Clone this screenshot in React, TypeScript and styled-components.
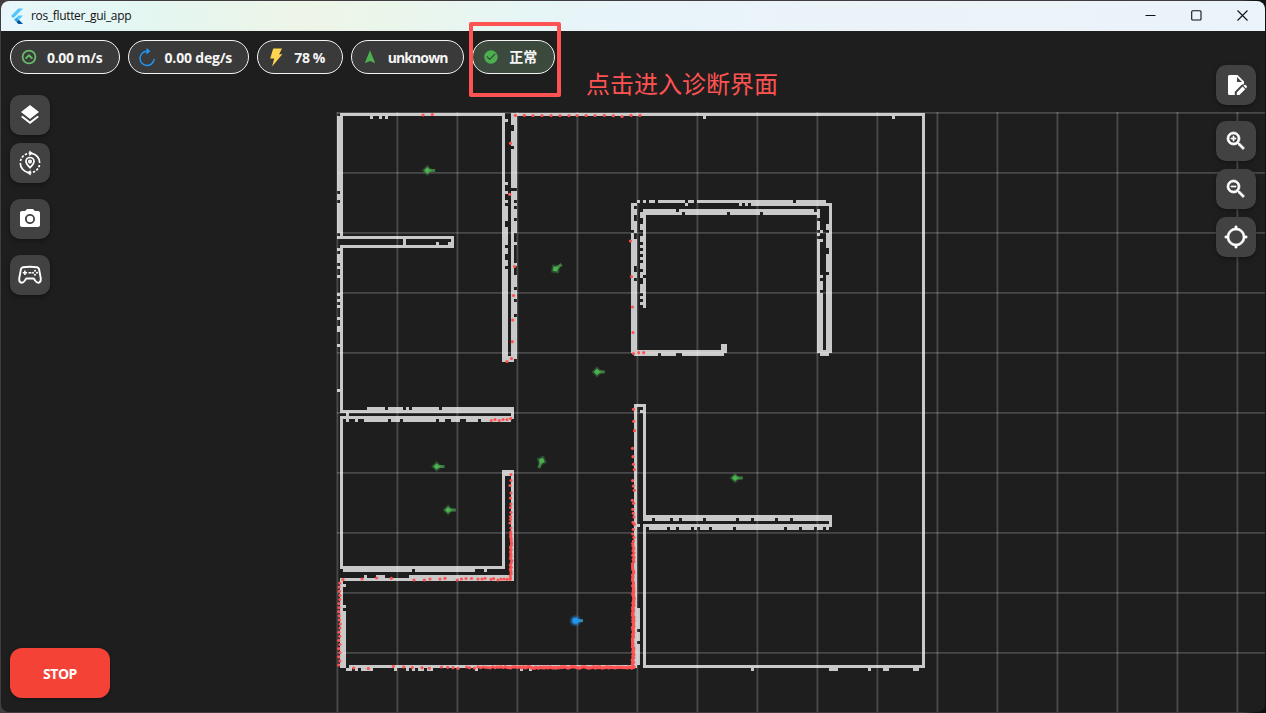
import React from "react";
import styled, { createGlobalStyle } from "styled-components";
import { MdLayers, MdPhotoCamera, MdZoomIn, MdZoomOut, MdLocationSearching, MdCheckCircle, MdNavigation } from "react-icons/md";

const GlobalStyle = createGlobalStyle`
  * { box-sizing: border-box; }
  body { margin: 0; background: #303030; font-family: "Open Sans", "Noto Sans CJK SC", sans-serif; overflow: hidden; }
`;

const Desktop = styled.div`
  width: 1266px;
  height: 713px;
  padding: 1px;
  background: linear-gradient(90deg, #403c40 0, #403c40 1240px, #111 1256px);
`;

const Window = styled.div`
  display: flex;
  flex-direction: column;
  width: 1264px;
  height: 711px;
  border-radius: 8px;
  overflow: hidden;
  background: #1e1e1e;
`;

const TitleBar = styled.header`
  display: flex;
  align-items: center;
  flex: 0 0 30px;
  padding-left: 9px;
  background: linear-gradient(97deg, #e8f6fb 0, #e3f7f4 110px, #e6f6ee 190px, #eef5e8 300px, #ebf6ea 380px, #e6f5f6 530px, #e8f4fa 640px, #ecf3f8 900px, #ebf3fb 1264px);
`;

const Title = styled.span`
  flex: 1;
  margin-left: 7px;
  font-size: 12px;
  line-height: 16px;
  letter-spacing: -0.33px;
  color: #111;
`;

const WindowControls = styled.div`
  display: flex;
  align-items: center;
`;

const ControlSlot = styled.span`
  display: flex;
  justify-content: center;
  width: 46px;
  padding-bottom: 1px;
`;

const Stage = styled.main`
  position: relative;
  display: grid;
  flex: 1;
  grid-template: minmax(0, 1fr) / minmax(0, 1fr);
`;

const MapView = styled.svg`
  grid-area: 1 / 1;
  width: 1264px;
  height: 681px;
`;

const Overlay = styled.div`
  grid-area: 1 / 1;
  z-index: 1;
  display: flex;
  justify-content: space-between;
  padding: 9px 9px 14px;
`;

const LeftPane = styled.div`
  display: flex;
  flex-direction: column;
`;

const StatusRow = styled.div`
  display: flex;
  gap: 8px;
`;

const Chip = styled.div<{ $w: number; $ok?: boolean }>`
  display: flex;
  align-items: center;
  width: ${(p) => p.$w}px;
  height: 34px;
  padding-left: 10px;
  border: 1.2px solid #f4f4f4;
  border-radius: 17px;
  background: ${(p) => (p.$ok ? "#3c4a3d" : "#3a3a3a")};
`;

const ChipIcon = styled.span<{ $c: string }>`
  display: flex;
  justify-content: center;
  width: 16px;
  margin-right: 10px;
  color: ${(p) => p.$c};
`;

const ChipText = styled.span<{ $track?: number; $lift?: boolean }>`
  padding-top: ${(p) => (p.$lift ? 0 : 2)}px;
  font-size: 14px;
  font-weight: 700;
  line-height: 20px;
  letter-spacing: ${(p) => p.$track ?? 0}px;
  white-space: nowrap;
  color: #f5f5f5;
`;

const ToolColumn = styled.div<{ $top: number }>`
  display: flex;
  flex-direction: column;
  padding-top: ${(p) => p.$top}px;
`;

const ToolButton = styled.button<{ $gap?: number; $bold?: number }>`
  display: flex;
  align-items: center;
  justify-content: center;
  width: 40px;
  height: 40px;
  margin: 0 0 ${(p) => p.$gap ?? 8}px;
  padding: 0;
  border: 0;
  border-radius: 10px;
  background: #424242;
  color: #fff;
  box-shadow: 0 2px 5px rgba(0, 0, 0, 0.35);

  > svg {
    overflow: visible;
    ${(p) => (p.$bold ? `stroke-width: ${p.$bold}px;` : "")}
  }

  > svg > path[fill="none"] {
    ${(p) => (p.$bold ? "stroke: none;" : "")}
  }
`;

const StopButton = styled.button`
  width: 100px;
  height: 50px;
  margin-top: auto;
  padding: 2px 0 0;
  border: 0;
  border-radius: 12px;
  background: #f44336;
  color: #fff;
  font: 700 14px/20px "Open Sans", sans-serif;
  letter-spacing: -0.5px;
  box-shadow: 0 1px 3px rgba(0, 0, 0, 0.4);
`;

const Highlight = styled.div`
  position: absolute;
  z-index: 2;
  left: 468px;
  top: -9px;
  width: 92px;
  height: 75px;
  border: 4px solid #ff5252;
  border-radius: 2px;
`;

const Note = styled.div`
  position: absolute;
  z-index: 2;
  left: 585px;
  top: 34px;
  font: 400 24px/36px "Noto Sans CJK SC", sans-serif;
  color: #ff5252;
  white-space: nowrap;
`;

/* Horizontal wall runs: top, height, then start/end pairs. */
const rows: [number, number, number[]][] = [
  [113, 3, [340, 505, 511, 925]],
  [116, 3, [370, 373, 379, 382, 385, 388, 703, 706, 892, 895]],
  [236, 3, [337, 454]],
  [239, 3, [403, 406, 451, 454]],
  [242, 3, [403, 406, 436, 439, 448, 454]],
  [245, 3, [340, 454]],
  [356, 6, [502, 514]],
  [407, 3, [367, 385, 388, 403, 406, 409, 412, 439, 442, 514]],
  [410, 3, [340, 514]],
  [413, 3, [346, 349, 511, 514]],
  [416, 3, [340, 514]],
  [419, 3, [346, 349, 355, 358, 364, 388, 391, 400, 403, 436, 439, 445, 451, 460, 466, 478, 481, 511]],
  [470, 6, [502, 514]],
  [566, 3, [340, 505]],
  [569, 3, [343, 412, 415, 475, 484, 487]],
  [575, 3, [364, 367, 376, 385, 409, 514]],
  [578, 3, [340, 514]],
  [665, 3, [349, 637, 643, 925]],
  [668, 3, [346, 352, 355, 358, 361, 373, 394, 397, 406, 409, 412, 415, 418, 424, 427, 433, 475, 478, 520, 523, 529, 532, 751, 754, 829, 838, 868, 871, 883, 889, 913, 919]],
  [404, 3, [634, 646]],
  [410, 3, [640, 643]],
  [515, 3, [643, 832]],
  [518, 3, [643, 652, 655, 670, 673, 679, 682, 703, 706, 736, 739, 751, 754, 775, 778, 790, 793, 832]],
  [521, 3, [829, 832]],
  [524, 3, [637, 640, 643, 832]],
  [527, 3, [643, 646, 649, 667, 670, 676, 679, 691, 694, 697, 700, 709, 712, 733, 736, 784, 787, 799, 802, 814, 817, 823, 826, 829]],
  [200, 3, [637, 640, 643, 646, 649, 655, 658, 685, 688, 694, 697, 793, 796, 826]],
  [203, 3, [631, 637, 685, 688, 739, 742, 745, 748, 751, 832]],
  [209, 3, [643, 676, 679, 814]],
  [212, 3, [640, 682, 685, 727, 730, 760, 763, 820]],
  [350, 3, [631, 727]],
  [353, 3, [634, 658, 661, 676, 682, 724]],
  [344, 6, [721, 727]],
  [350, 6, [820, 829]],
];

/* Vertical wall runs, each one cell wide: left, then start/end pairs. */
const columns: [number, number[]][] = [
  [337, [116, 191, 194, 200, 203, 233, 248, 251, 254, 263, 266, 269, 275, 278, 293, 296, 299, 302, 305, 308, 317, 320, 326, 332, 344, 347, 389, 392]],
  [340, [116, 236, 248, 410, 419, 566, 581, 668]],
  [343, [584, 587, 605, 608, 611, 668]],
  [502, [116, 356, 476, 566]],
  [505, [119, 122, 182, 185, 191, 194, 200, 203, 206, 221, 227, 245, 248, 254, 260, 266, 269, 356]],
  [511, [116, 125, 131, 146, 149, 188, 191, 356, 476, 575]],
  [514, [116, 188, 191, 200, 203, 206, 209, 218, 221, 233, 242, 245, 263, 266, 275, 287, 290, 299, 302, 314, 317, 359]],
  [634, [407, 665]],
  [637, [608, 629, 632, 641, 644, 665]],
  [643, [407, 515, 530, 665]],
  [922, [116, 665]],
  [631, [206, 230, 233, 350]],
  [634, [209, 215, 221, 233, 239, 266, 272, 278, 281, 350]],
  [643, [215, 275, 278, 308]],
  [640, [215, 218, 224, 230, 236, 242, 245, 248, 251, 254, 257, 260, 263, 269, 272, 278, 284, 293, 296, 299, 302, 305]],
  [817, [209, 212, 215, 218, 221, 230, 233, 236, 239, 353]],
  [820, [230, 233, 239, 242, 275, 278, 281, 290, 293, 350]],
  [826, [224, 230, 233, 248, 254, 272, 275, 350]],
  [829, [206, 353]],
];

function wallPath() {
  let d = "";
  for (const [y, h, xs] of rows)
    for (let i = 0; i < xs.length; i += 2) d += `M${xs[i]} ${y}H${xs[i + 1]}V${y + h}H${xs[i]}Z`;
  for (const [x, ys] of columns)
    for (let i = 0; i < ys.length; i += 2) d += `M${x} ${ys[i]}H${x + 3}V${ys[i + 1]}H${x}Z`;
  return d;
}

const scan: [number, number][] = [
  [423, 115], [432.3, 114.5], [515.3, 115.3], [524.3, 115.3], [533, 115.5], [542, 115.5], [551, 115.5], [560, 115.5], [569, 115.5], [577, 115.5], [586, 115.5], [595, 115.5], [604.3, 115.3], [613.3, 115.7], [622, 116.5], [631, 115.3], [640, 115.3],
  [510.5, 143.3], [509.7, 194.3], [514.5, 266.5], [513.5, 295.5], [512.7, 320], [512.3, 341.7], [511.5, 358.5], [507, 361.5],
  [491.3, 420.5], [495, 419.5], [499.3, 420.5], [503, 419.5], [507, 419.5], [510.7, 418.5],
  [630.5, 241], [631.5, 276.5], [632.5, 307], [633, 332.5], [633.5, 353.5], [638.7, 352.7], [643.7, 352.7],
  [511, 474.5], [511, 480.5], [510, 485.5], [511, 493], [510.5, 498], [511, 504], [510.5, 507.5], [511, 512.5], [510.5, 516.5], [510.5, 519.5], [510, 523], [511, 528],
  [343, 579.5], [362, 579], [376.7, 578], [391.3, 578.3], [414, 580], [424.3, 580], [430, 579], [440, 579], [445, 578.3], [457.3, 580], [461.5, 579], [466, 578.5], [471.5, 578.5], [478, 579], [482, 579], [485, 578.3], [491, 579.3], [493.7, 578.7], [498, 580], [501, 579], [504, 579], [507, 579.3], [510, 579.3],
  [353.7, 668], [368.3, 668.5], [393.3, 666.3], [403.7, 667], [412.3, 667.5], [422, 667.7], [429.3, 668.3], [441.5, 667], [447.7, 667.3], [453, 667.7], [458, 668.3], [466.7, 667], [469.5, 667.7], [474.5, 668],
  [633.5, 409.3], [633.7, 421.3], [634.5, 430.7], [632.5, 448.3], [633, 456.7], [633.5, 464.3], [634.3, 469.7], [632.7, 480.7], [633.3, 486], [634.3, 490.3], [632.3, 500.3], [633.7, 503.3], [632.7, 509.3], [633.3, 513.3], [634, 517], [633, 522.3], [634.3, 524.3], [633.3, 529.3], [632.7, 534], [634, 537.3],
];

/* Repeatable range noise in -1..1 for the dense parts of the scan. */
const noise = (n: number) => {
  const v = Math.sin(n * 78.233 + 4.1) * 43758.5453;
  return (v - Math.floor(v)) * 2 - 1;
};
for (let y = 532, i = 0; y < 579; y += 2.2, i++) scan.push([511 + noise(i) * 0.9, y]);
for (let y = 583, i = 0; y < 668; y += 4.1, i++) scan.push([339.4 + noise(i + 60) * 0.8, y]);
for (let x = 478, i = 0; x < 635; x += Math.max(1.1, 2.6 - i * 0.06), i++) scan.push([x, 667.4 + noise(i + 90) * 0.8]);
for (let y = 541, i = 0; y < 668; y += Math.max(1.1, 2.5 - i * 0.05), i++) scan.push([633.2 + noise(i + 300) * 0.8, y]);

const waypoints: [number, number, number][] = [
  [427.3, 170.4, 0], [555.5, 269, -38], [597, 371.9, 0], [436.7, 466.5, 0], [448.1, 510, 0], [541.7, 460.7, 112], [735, 478, 0],
];

const gridX = Array.from({ length: 16 }, (_, i) => 337.4 + i * 60);
const gridY = Array.from({ length: 10 }, (_, i) => 112.9 + i * 60);

function OccupancyMap() {
  return (
    <MapView viewBox="1 31 1264 681">
      <path d={wallPath()} fill="#c9c9c9" shapeRendering="crispEdges" />
      <g stroke="#fff" strokeOpacity="0.19" strokeWidth="1.9">
        {gridX.map((x) => <path key={x} d={`M${x} 112V713`} />)}
        {gridY.map((y) => <path key={y} d={`M337 ${y}H1265`} />)}
      </g>
      <g fill="#ff5252">
        {scan.map(([x, y], i) => <circle key={i} cx={x} cy={y} r="1.6" />)}
      </g>
      {waypoints.map(([x, y, a]) => (
        <g key={x} transform={`translate(${x} ${y}) rotate(${a})`} fill="#4caf50">
          <path d="M-5.6 0L0-5.6L5.6 0L0 5.6Z" opacity="0.32" />
          <path d="M0-1.5H7.8V1.5H0Z" opacity="0.65" />
          <path d="M-3.3 0L0-3.3L3.3 0L0 3.3Z" />
        </g>
      ))}
      <g transform="translate(575.4 620.7)" fill="#2196f3">
        <circle r="5.8" opacity="0.25" />
        <circle r="4.3" opacity="0.4" />
        <path d="M0-1.5H7.6V1.5H0Z" fill="#2fa5d0" opacity="0.8" />
        <circle r="3" />
      </g>
    </MapView>
  );
}

const FlutterLogo = () => (
  <svg width="14" height="17" viewBox="0 0 14 17">
    <path d="M8.3 .5H13L3.3 10.2L1 7.9Z" fill="#54c5f8" />
    <path d="M8.3 7.6H13L8.9 11.8L6.5 9.4Z" fill="#54c5f8" />
    <path d="M4.1 11.8L6.5 9.4L8.9 11.8L6.5 14.1Z" fill="#29a8e8" />
    <path d="M6.5 14.1L8.9 11.8L13 16H8.3Z" fill="#01579b" />
  </svg>
);

const SpeedIcon = () => (
  <svg width="16" height="16" viewBox="0 0 16 16" fill="none" stroke="currentColor">
    <circle cx="8" cy="8" r="6.4" strokeWidth="1.8" />
    <path d="M4.6 9.6L8 6.3L11.4 9.6" strokeWidth="2" />
  </svg>
);

const RotateIcon = () => (
  <svg width="18" height="20" viewBox="0 0 18 20" style={{ flex: "none" }}>
    <path d="M9 4.2A7.1 7.1 0 1 0 16.2 11.8" fill="none" stroke="currentColor" strokeWidth="1.5" />
    <path d="M8.5 .8L12.4 4.2L8.5 7.6Z" fill="currentColor" />
  </svg>
);

const BoltIcon = () => (
  <svg width="14" height="19" viewBox="0 0 14 19">
    <path d="M4.2 .5H13L10.1 6.2H13.3L3.1 18.5L5.2 10.5H1.2Z" fill="currentColor" />
  </svg>
);

const RelocateIcon = () => (
  <svg width="24" height="26" viewBox="0 0 24 26" fill="none" stroke="currentColor" strokeWidth="1.7">
    <path d="M13.5 3.3A9.7 9.7 0 0 1 21.7 13" />
    <path d="M21.5 15A9.7 9.7 0 0 1 12 22.7" strokeDasharray="2.4 1.5" />
    <path d="M10.5 22.6A9.7 9.7 0 0 1 2.3 13" />
    <path d="M2.5 11A9.7 9.7 0 0 1 12 3.3" strokeDasharray="2.4 1.5" />
    <path d="M11.3 .5L15.2 3.2L11.3 6ZM12.7 20L8.8 22.8L12.7 25.5Z" fill="currentColor" stroke="none" />
    <path d="M12 17.7C9.5 15.1 8 13.4 8 11.5A4 4 0 0 1 16 11.5C16 13.4 14.5 15.1 12 17.7Z" />
    <circle cx="12" cy="11.6" r="1.2" />
  </svg>
);

const GamepadIcon = () => (
  <svg width="24" height="20" viewBox="0 0 24 20" fill="none" stroke="currentColor" strokeWidth="1.9" strokeLinejoin="round">
    <path d="M5 2.2Q12 1.2 19 2.2Q20.7 2.5 21.1 4.3L22.8 13.5Q23 17.4 20.3 17.7Q18.8 17.8 17.3 15.8L15.8 13.5H8.2L6.7 15.8Q5.2 17.8 3.7 17.7Q1 17.4 1.2 13.5L2.9 4.3Q3.3 2.5 5 2.2Z" />
    <path d="M6.9 5.6V10M4.7 7.8H9.1M10.5 7.8H13.5" strokeWidth="1.6" />
    <g fill="currentColor" stroke="none"><circle cx="17" cy="5.8" r="1" /><circle cx="17" cy="9.8" r="1" /><circle cx="15" cy="7.8" r="1" /><circle cx="19" cy="7.8" r="1" /></g>
  </svg>
);

const EditFileIcon = () => (
  <svg width="24" height="24" viewBox="0 0 24 24" fill="currentColor">
    <path d="M4 3.5Q4 2 5.5 2H13.5L20 8.5V11.2Q18.5 11 17.2 12.3L10.8 18.7V22H5.5Q4 22 4 20.5ZM13 4V9H18Z" fillRule="evenodd" />
    <path d="M12.8 22V19.4L18.6 13.6L21.2 16.2L15.4 22ZM19.4 12.8L20.3 12Q21 11.5 21.7 12.1L22.7 13.1Q23.2 13.8 22.7 14.5L21.9 15.4Z" />
  </svg>
);

export default function App() {
  return (
    <Desktop>
      <GlobalStyle />
      <Window>
        <TitleBar>
          <FlutterLogo />
          <Title>ros_flutter_gui_app</Title>
          <WindowControls>
            <ControlSlot><svg width="11" height="11" viewBox="0 0 11 11"><path d="M.5 5.5H10.5" stroke="#111" /></svg></ControlSlot>
            <ControlSlot><svg width="11" height="11" viewBox="0 0 11 11"><rect x=".7" y=".7" width="9.3" height="9.3" rx="1" fill="none" stroke="#111" strokeWidth="1.1" /></svg></ControlSlot>
            <ControlSlot><svg width="11" height="11" viewBox="0 0 11 11"><path d="M.5.5L10.5 10.5M10.5.5L.5 10.5" stroke="#111" strokeWidth="1.1" /></svg></ControlSlot>
          </WindowControls>
        </TitleBar>
        <Stage>
          <OccupancyMap />
          <Overlay>
            <LeftPane>
              <StatusRow>
                <Chip $w={109.5}><ChipIcon $c="#66bb6a"><SpeedIcon /></ChipIcon><ChipText $track={-0.36}>0.00 m/s</ChipText></Chip>
                <Chip $w={121.8}><ChipIcon $c="#2196f3"><RotateIcon /></ChipIcon><ChipText $track={-0.18}>0.00 deg/s</ChipText></Chip>
                <Chip $w={85.4}><ChipIcon $c="#ffd54f"><BoltIcon /></ChipIcon><ChipText $track={-0.4}>78 %</ChipText></Chip>
                <Chip $w={113.6}><ChipIcon $c="#4caf50"><MdNavigation size={16} /></ChipIcon><ChipText $track={-0.9}>unknown</ChipText></Chip>
                <Chip $w={82.7} $ok><ChipIcon $c="#4caf50"><MdCheckCircle size={16} /></ChipIcon><ChipText $lift>正常</ChipText></Chip>
              </StatusRow>
              <ToolColumn $top={21}>
                <ToolButton><MdLayers size={24} /></ToolButton>
                <ToolButton $gap={16}><RelocateIcon /></ToolButton>
                <ToolButton $gap={16}><MdPhotoCamera size={24} /></ToolButton>
                <ToolButton><GamepadIcon /></ToolButton>
              </ToolColumn>
              <StopButton>STOP</StopButton>
            </LeftPane>
            <ToolColumn $top={25}>
              <ToolButton $gap={16}><EditFileIcon /></ToolButton>
              <ToolButton $bold={0.7}><MdZoomIn size={24} stroke="currentColor" /></ToolButton>
              <ToolButton $bold={0.7}><MdZoomOut size={24} stroke="currentColor" /></ToolButton>
              <ToolButton $bold={0.7}><MdLocationSearching size={24} stroke="currentColor" /></ToolButton>
            </ToolColumn>
          </Overlay>
          <Highlight />
          <Note>点击进入诊断界面</Note>
        </Stage>
      </Window>
    </Desktop>
  );
}
